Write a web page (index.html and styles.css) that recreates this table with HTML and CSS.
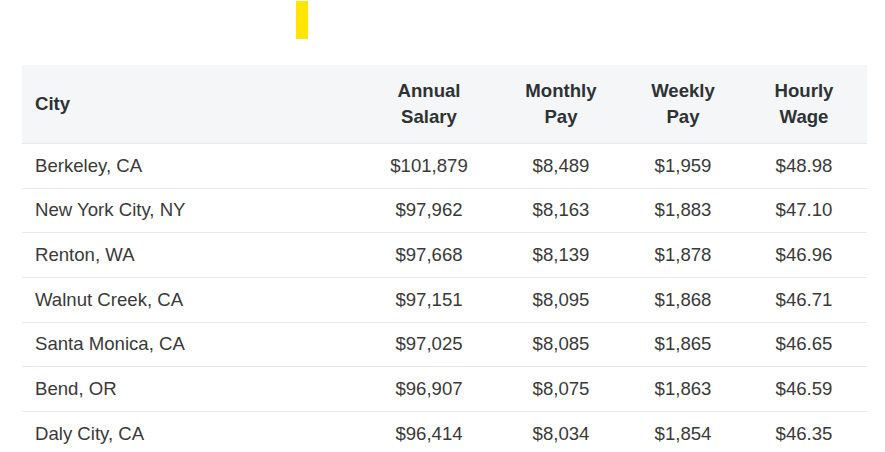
FILE: index.html
```html
<!DOCTYPE html>
<html>
<head>
<meta charset="utf-8">
<link rel="stylesheet" href="styles.css">
</head>
<body>
<div class="page">
  <div class="accent-row"><span class="accent"></span></div>
  <table class="salary-table">
    <colgroup>
      <col class="c-city">
      <col class="c-annual">
      <col class="c-month">
      <col class="c-week">
      <col class="c-hour">
    </colgroup>
    <thead>
      <tr>
        <th class="left">City</th>
        <th>Annual<br>Salary</th>
        <th>Monthly<br>Pay</th>
        <th>Weekly<br>Pay</th>
        <th>Hourly<br>Wage</th>
      </tr>
    </thead>
    <tbody>
      <tr><td class="left">Berkeley, CA</td><td>$101,879</td><td>$8,489</td><td>$1,959</td><td>$48.98</td></tr>
      <tr><td class="left">New York City, NY</td><td>$97,962</td><td>$8,163</td><td>$1,883</td><td>$47.10</td></tr>
      <tr><td class="left">Renton, WA</td><td>$97,668</td><td>$8,139</td><td>$1,878</td><td>$46.96</td></tr>
      <tr><td class="left">Walnut Creek, CA</td><td>$97,151</td><td>$8,095</td><td>$1,868</td><td>$46.71</td></tr>
      <tr><td class="left">Santa Monica, CA</td><td>$97,025</td><td>$8,085</td><td>$1,865</td><td>$46.65</td></tr>
      <tr><td class="left">Bend, OR</td><td>$96,907</td><td>$8,075</td><td>$1,863</td><td>$46.59</td></tr>
      <tr><td class="left">Daly City, CA</td><td>$96,414</td><td>$8,034</td><td>$1,854</td><td>$46.35</td></tr>
    </tbody>
  </table>
</div>
</body>
</html>
```
FILE: styles.css
```css
html, body {
  margin: 0;
  padding: 0;
  background: #ffffff;
}
body {
  font-family: "Liberation Sans", Arial, sans-serif;
  color: #333333;
}
.page {
  padding: 1px 18px 0 22px;
}
.accent-row {
  display: flex;
  padding-left: 274px;
  height: 38px;
}
.accent {
  display: block;
  width: 12px;
  height: 38px;
  background: #ffe600;
}
.salary-table {
  margin-top: 26px;
  width: 845px;
  border-collapse: collapse;
  table-layout: fixed;
  font-size: 18.6px;
}
.c-city { width: 339px; }
.c-annual { width: 136px; }
.c-month { width: 128px; }
.c-week { width: 116px; }
.c-hour { width: 126px; }
.salary-table th {
  background: #f4f6f7;
  font-weight: bold;
  line-height: 26px;
  padding: 13px 12px;
  text-align: center;
  color: #2f3235;
  border-bottom: 1px solid #e6e8ea;
}
.salary-table td {
  line-height: 20.67px;
  padding: 11.5px 12px;
  text-align: center;
  color: #3a3a3a;
  border-bottom: 1px solid #e6e8ea;
}
.salary-table .left {
  text-align: left;
  padding-left: 13px;
}
```
